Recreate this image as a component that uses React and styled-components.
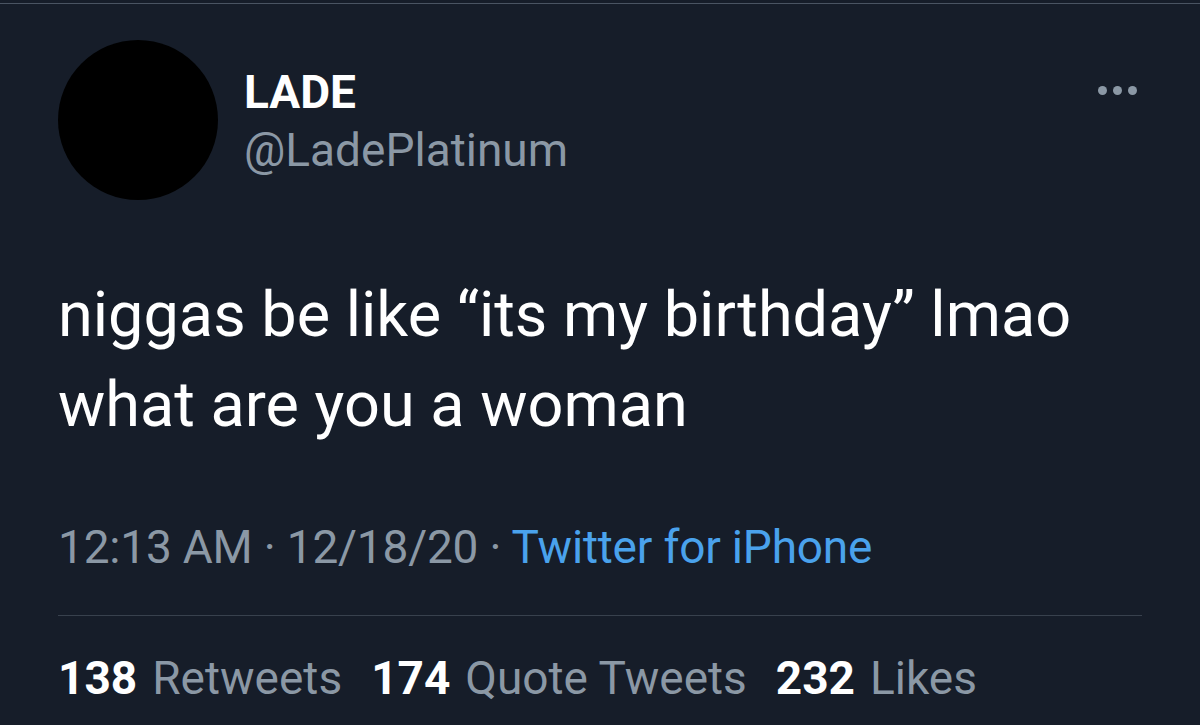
import React from 'react';
import styled, { createGlobalStyle } from 'styled-components';

const GlobalStyle = createGlobalStyle`
  html, body {
    margin: 0;
    padding: 0;
    background: #161d29;
  }
  body {
    font-family: Roboto, "Liberation Sans", sans-serif;
    -webkit-font-smoothing: antialiased;
  }
`;

const StyledScreen = styled.div`
  width: 1200px;
  height: 725px;
  overflow: hidden;
  background: #161d29;
  border-top: 1px solid #4a5462;
  margin-top: 3px;
  box-sizing: border-box;
  padding: 36px 58px 0 58px;
`;
const StyledHeader = styled.div`
  display: flex;
  align-items: center;
  gap: 26px;
`;
const StyledAvatar = styled.div`
  width: 160px;
  height: 160px;
  border-radius: 50%;
  background: #000;
  flex-shrink: 0;
`;
const StyledNames = styled.div`
  display: flex;
  flex-direction: column;
  flex: 1;
  margin-top: 2px;
`;
const StyledName = styled.div`
  color: #fff;
  font-weight: 700;
  font-size: 46px;
  line-height: 58px;
`;
const StyledHandle = styled.div`
  color: #8b98a5;
  font-size: 46px;
  line-height: 58px;
`;
const StyledMore = styled.div`
  align-self: flex-start;
  display: flex;
  gap: 6px;
  margin-top: 46px;
  margin-right: 5px;
  span {
    width: 9px;
    height: 9px;
    border-radius: 50%;
    background: #8b98a5;
  }
`;
const StyledText = styled.div`
  color: #fff;
  font-size: 63px;
  line-height: 90px;
  margin-top: 70px;
`;
const StyledMeta = styled.div`
  color: #8b98a5;
  font-size: 46px;
  line-height: 56px;
  margin-top: 69px;
  letter-spacing: -0.2px;
`;
const StyledLink = styled.span`
  color: #4aa2ec;
`;
const StyledDivider = styled.div`
  height: 1px;
  background: #38414d;
  margin-top: 40px;
`;
const StyledStats = styled.div`
  display: flex;
  gap: 29px;
  margin-top: 34px;
  font-size: 46px;
  line-height: 56px;
  color: #8b98a5;
`;
const StyledStat = styled.span`
  b {
    color: #fff;
    font-weight: 700;
    margin-right: 15px;
  }
`;

const App = () => {
  return (
    <>
      <GlobalStyle />
      <StyledScreen>
        <StyledHeader>
          <StyledAvatar />
          <StyledNames>
            <StyledName>LADE</StyledName>
            <StyledHandle>@LadePlatinum</StyledHandle>
          </StyledNames>
          <StyledMore>
            <span />
            <span />
            <span />
          </StyledMore>
        </StyledHeader>
        <StyledText>
          niggas be like “its my birthday” lmao
          <br />
          what are you a woman
        </StyledText>
        <StyledMeta>
          12:13 AM · 12/18/20 · <StyledLink>Twitter for iPhone</StyledLink>
        </StyledMeta>
        <StyledDivider />
        <StyledStats>
          <StyledStat><b>138</b>Retweets</StyledStat>
          <StyledStat><b>174</b>Quote Tweets</StyledStat>
          <StyledStat><b>232</b>Likes</StyledStat>
        </StyledStats>
      </StyledScreen>
    </>
  );
};

export default App;
